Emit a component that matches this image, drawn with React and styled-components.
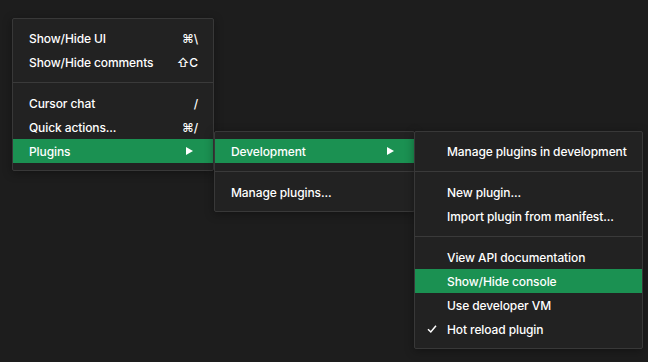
import React from "react";
import styled, { createGlobalStyle } from "styled-components";

const Global = createGlobalStyle`
  html, body { margin: 0; padding: 0; background: #1d1d1d; }
  body { width: 648px; height: 362px; overflow: hidden; font-family: Inter, "Noto Sans", "DejaVu Sans", sans-serif; }
`;

const Canvas = styled.div`
  position: relative;
  width: 648px;
  height: 362px;
  background: #1d1d1d;
`;

const Menu = styled.div`
  position: absolute;
  left: ${(p) => p.$left}px;
  top: ${(p) => p.$top}px;
  width: ${(p) => p.$width}px;
  box-sizing: border-box;
  background: #222222;
  border: 1px solid #383838;
  border-radius: 2px;
  padding: 7px 0;
  box-shadow: 0 2px 10px rgba(0, 0, 0, 0.35);
  display: flex;
  flex-direction: column;
`;

const Item = styled.div`
  height: 24px;
  display: flex;
  align-items: center;
  padding: 0 15px 0 ${(p) => p.$indent}px;
  background: ${(p) => (p.$active ? "#1b9152" : "transparent")};
  color: #ffffff;
  font-size: 12px;
  font-weight: 500;
  letter-spacing: -0.1px;
  position: relative;
`;

const Label = styled.span`
  flex: 1;
  white-space: nowrap;
`;

const Shortcut = styled.span`
  font-family: Inter, "DejaVu Sans", sans-serif;
  font-size: 12px;
  display: flex;
  align-items: center;
  gap: 2px;
`;

const Check = styled.span`
  position: absolute;
  left: 12px;
  top: 7px;
  width: 10px;
  height: 10px;
  display: flex;
`;

const Arrow = styled.span`
  margin-right: 5px;
  display: flex;
`;

const Separator = styled.div`
  height: 1px;
  background: #3a3a3a;
  margin: 8px 0;
`;

const Tri = () => (
  <svg width="7" height="8" viewBox="0 0 7 8">
    <path d="M0 0 L7 4 L0 8 Z" fill="#fff" />
  </svg>
);

const Tick = () => (
  <svg width="10" height="10" viewBox="0 0 10 10">
    <path d="M1 5.2 L3.8 8 L9 1.8" fill="none" stroke="#fff" strokeWidth="1.5" />
  </svg>
);

export default function App() {
  return (
    <Canvas>
      <Global />
      <Menu $left={12} $top={18} $width={202}>
        <Item $indent={16}>
          <Label>Show/Hide UI</Label>
          <Shortcut>⌘\</Shortcut>
        </Item>
        <Item $indent={16}>
          <Label>Show/Hide comments</Label>
          <Shortcut>⇧C</Shortcut>
        </Item>
        <Separator />
        <Item $indent={16}>
          <Label>Cursor chat</Label>
          <Shortcut>/</Shortcut>
        </Item>
        <Item $indent={16}>
          <Label>Quick actions...</Label>
          <Shortcut>⌘/</Shortcut>
        </Item>
        <Item $indent={16} $active>
          <Label>Plugins</Label>
          <Arrow>
            <Tri />
          </Arrow>
        </Item>
      </Menu>

      <Menu $left={214} $top={131} $width={201}>
        <Item $indent={16} $active>
          <Label>Development</Label>
          <Arrow>
            <Tri />
          </Arrow>
        </Item>
        <Separator />
        <Item $indent={16}>
          <Label>Manage plugins...</Label>
        </Item>
      </Menu>

      <Menu $left={414} $top={131} $width={229}>
        <Item $indent={32}>
          <Label>Manage plugins in development</Label>
        </Item>
        <Separator />
        <Item $indent={32}>
          <Label>New plugin...</Label>
        </Item>
        <Item $indent={32}>
          <Label>Import plugin from manifest...</Label>
        </Item>
        <Separator />
        <Item $indent={32}>
          <Label>View API documentation</Label>
        </Item>
        <Item $indent={32} $active>
          <Label>Show/Hide console</Label>
        </Item>
        <Item $indent={32}>
          <Label>Use developer VM</Label>
        </Item>
        <Item $indent={32}>
          <Check>
            <Tick />
          </Check>
          <Label>Hot reload plugin</Label>
        </Item>
      </Menu>
    </Canvas>
  );
}
